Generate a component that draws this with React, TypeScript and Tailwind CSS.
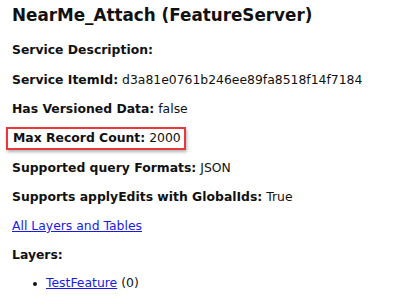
import React from 'react';

const rows: { label: string; value?: string }[] = [
  { label: 'Service Description:' },
  { label: 'Service ItemId:', value: 'd3a81e0761b246ee89fa8518f14f7184' },
  { label: 'Has Versioned Data:', value: 'false' },
];

const rows2: { label: string; value?: string }[] = [
  { label: 'Supported query Formats:', value: 'JSON' },
  { label: 'Supports applyEdits with GlobalIds:', value: 'True' },
];

const Row = ({ label, value }: { label: string; value?: string }) => (
  <div className="h-[29.3px] flex items-center">
    <span className="font-bold">{label}</span>
    {value && <span>&nbsp;{value}</span>}
  </div>
);

export default function App() {
  return (
    <div
      className="w-[400px] h-[296px] bg-white text-[#111] overflow-hidden px-[12px] pt-[2px]"
      style={{ fontFamily: '"DejaVu Sans", Verdana, sans-serif' }}
    >
      <h1 className="text-[16.8px] font-bold h-[28px] flex items-center mb-[6px]">NearMe_Attach (FeatureServer)</h1>
      <div className="text-[12.4px]">
        {rows.map((r) => (
          <Row key={r.label} {...r} />
        ))}
        <div className="h-[29.3px] flex items-center">
          <div className="ml-[-6px] pl-[5px] pr-[3px] h-[23px] flex items-center border-2 border-[#e8383d] shadow-[1px_2px_3px_rgba(0,0,0,0.3)]">
            <span className="font-bold">Max Record Count:</span>
            <span>&nbsp;2000</span>
          </div>
        </div>
        {rows2.map((r) => (
          <Row key={r.label} {...r} />
        ))}
        <div className="h-[29px] flex items-center">
          <a href="#" className="text-[#1a1ae6] underline">All Layers and Tables</a>
        </div>
        <div className="h-[29px] flex items-center font-bold">Layers:</div>
        <ul className="pl-[21px]">
          <li className="h-[28px] flex items-center">
            <span className="w-[4px] h-[4px] rounded-full bg-[#111] mr-[9px]" />
            <a href="#" className="text-[#1a1ae6] underline">TestFeature</a>
            <span>&nbsp;(0)</span>
          </li>
        </ul>
      </div>
    </div>
  );
}
